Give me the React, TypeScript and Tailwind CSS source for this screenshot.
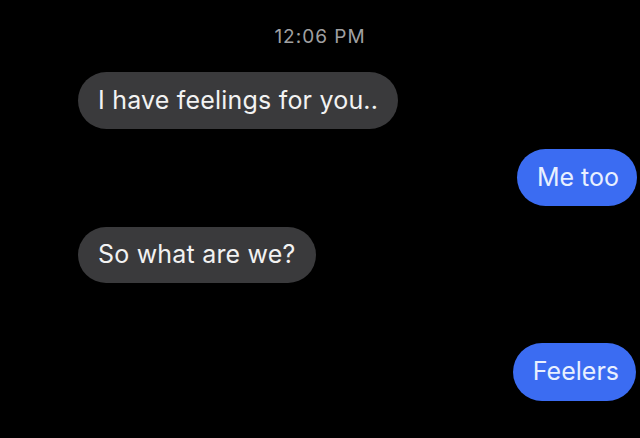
export default function App() {
  const font = { fontFamily: 'Inter, "Liberation Sans", Arial, sans-serif' };
  return (
    <div className="w-[640px] h-[438px] bg-black overflow-hidden flex flex-col" style={font}>
      <div className="pt-[26px] text-center text-[19px] leading-[22px] tracking-[1px] text-[#a0a0a2]">12:06 PM</div>
      <div className="mt-[24px] pl-[78px] flex">
        <div className="h-[57px] px-5 rounded-full bg-[#3a3a3c] text-[#f2f2f2] text-[25px] tracking-[0.2px] flex items-center">I have feelings for you..</div>
      </div>
      <div className="mt-[20px] pr-[3px] flex justify-end">
        <div className="h-[57px] pl-5 pr-[18px] rounded-full bg-[#3b6cf2] text-[#e8f0ff] text-[25px] flex items-center">Me too</div>
      </div>
      <div className="mt-[21px] pl-[78px] flex">
        <div className="h-[56px] px-5 rounded-full bg-[#3a3a3c] text-[#f2f2f2] text-[25px] tracking-[0.2px] flex items-center">So what are we?</div>
      </div>
      <div className="mt-[60px] pr-[4px] flex justify-end">
        <div className="h-[58px] pl-5 pr-[17px] rounded-full bg-[#3b6cf2] text-[#e8f0ff] text-[25px] flex items-center">Feelers</div>
      </div>
    </div>
  );
}
